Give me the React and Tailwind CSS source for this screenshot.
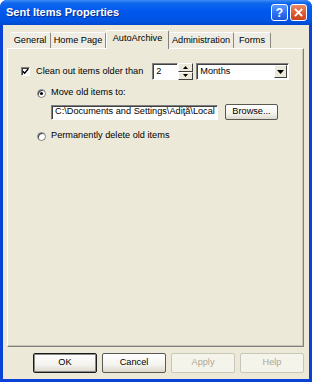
import React from "react";

const tabs = [
  { label: "General", w: "w-[41px]" },
  { label: "Home Page", w: "w-[55px]" },
  { label: "AutoArchive", w: "w-[63px]", active: true },
  { label: "Administration", w: "w-[65px]" },
  { label: "Forms", w: "w-[37px]" },
];

export default function App() {
  return (
    <div className="w-[312px] h-[382px] flex flex-col bg-[#0842d6] rounded-t-[7px] overflow-hidden font-['Liberation_Sans',Arial,sans-serif] text-[9.2px] text-black leading-none">
      {/* TITLE BAR */}
      <div className="h-[25px] shrink-0 flex items-center justify-between pl-[6px] pr-[5px] bg-[linear-gradient(180deg,#3f8ff7_0%,#1068ee_12%,#0058ee_45%,#0054e3_85%,#0048cc_100%)]">
        <span className="text-white font-bold text-[11px] [text-shadow:1px_1px_0_#0b2a8a]">
          Sent Items Properties
        </span>
        <div className="flex gap-[2px]">
          <div className="w-[17px] h-[17px] rounded-[3px] border border-white bg-[linear-gradient(180deg,#5a9bfc_0%,#2a6df1_60%,#1e58d8_100%)] flex items-center justify-center text-white font-bold text-[12px]">
            ?
          </div>
          <div className="w-[17px] h-[17px] rounded-[3px] border border-white bg-[linear-gradient(180deg,#ec8c66_0%,#de5a32_55%,#c8431f_100%)] flex items-center justify-center">
            <svg width="9" height="9" viewBox="0 0 9 9">
              <path d="M1.5 1.5 L7.5 7.5 M7.5 1.5 L1.5 7.5" stroke="#fff" strokeWidth="1.8" strokeLinecap="square" />
            </svg>
          </div>
        </div>
      </div>

      {/* BODY */}
      <div className="flex-1 mx-[3px] mb-[3px] bg-[#ece9d8] flex flex-col pt-[5px] pl-[4px] pr-[5px]">
        {/* TABS */}
        <div className="h-[18px] flex items-end pl-[3px] relative z-10">
          {tabs.map((t) =>
            t.active ? (
              <div
                key={t.label}
                className={`${t.w} h-[19px] -mb-[1px] bg-[#ece9d8] border-t border-l border-white border-r border-r-[#808080] rounded-t-[2px] flex items-center justify-center pb-[2px]`}
              >
                {t.label}
              </div>
            ) : (
              <div
                key={t.label}
                className={`${t.w} h-[16px] bg-[#efede3] border-t border-t-white border-r border-r-[#8c8a80] rounded-t-[2px] flex items-center justify-center`}
              >
                {t.label}
              </div>
            )
          )}
        </div>

        {/* PANEL */}
        <div className="h-[299px] shrink-0 border border-t-white border-l-white border-r-[#808080] border-b-[#808080] shadow-[inset_-1px_-1px_0_#c8c5b6] pt-[14px] pl-[13px]">
          {/* Clean out row */}
          <div className="h-[17px] flex items-center">
            <div className="w-[9px] h-[9px] bg-white border border-t-[#808080] border-l-[#808080] border-r-white border-b-white shadow-[inset_1px_1px_0_#404040] flex items-center justify-center">
              <svg width="7" height="7" viewBox="0 0 7 7">
                <path d="M0.8 3.2 L2.6 5.2 L6.2 1" stroke="#000" strokeWidth="1.4" fill="none" />
              </svg>
            </div>
            <span className="ml-[6px]">Clean out items older than</span>
            <div className="ml-[9px] w-[26px] h-[17px] bg-white border border-t-[#808080] border-l-[#808080] border-r-white border-b-white shadow-[inset_1px_1px_0_#404040] flex items-center pl-[3px]">
              2
            </div>
            <div className="w-[15px] h-[17px] flex flex-col">
              <SpinButton up />
              <SpinButton />
            </div>
            <div className="ml-[3px] w-[93px] h-[17px] bg-white border border-t-[#808080] border-l-[#808080] border-r-white border-b-white shadow-[inset_1px_1px_0_#404040] flex items-center justify-between pl-[3px] pr-[1px]">
              <span>Months</span>
              <div className="w-[13px] h-[13px] bg-[#ece9d8] border border-t-white border-l-white border-r-[#404040] border-b-[#404040] flex items-center justify-center">
                <svg width="7" height="4" viewBox="0 0 7 4">
                  <path d="M0 0 H7 L3.5 4 Z" fill="#000" />
                </svg>
              </div>
            </div>
          </div>

          {/* Move old items */}
          <div className="mt-[7px] ml-[16px] h-[12px] flex items-center">
            <Radio checked />
            <span className="ml-[5px]">Move old items to:</span>
          </div>

          <div className="mt-[5px] ml-[30px] flex items-center gap-[7px]">
            <div className="w-[167px] h-[15px] bg-white border border-t-[#808080] border-l-[#808080] border-r-white border-b-white shadow-[inset_1px_1px_0_#404040] flex items-center pl-[3px] whitespace-nowrap overflow-hidden">
              C:\Documents and Settings\Adiţă\Local
            </div>
            <XpButton className="w-[53px] h-[16px]">Browse...</XpButton>
          </div>

          <div className="mt-[10px] ml-[16px] h-[12px] flex items-center">
            <Radio />
            <span className="ml-[5px]">Permanently delete old items</span>
          </div>
        </div>

        {/* BUTTONS */}
        <div className="mt-[6px] flex justify-end gap-[5px]">
          <XpButton className="w-[64px] h-[20px]" isDefault>OK</XpButton>
          <XpButton className="w-[64px] h-[20px]">Cancel</XpButton>
          <XpButton className="w-[64px] h-[20px]" disabled>Apply</XpButton>
          <XpButton className="w-[64px] h-[20px]" disabled>Help</XpButton>
        </div>
      </div>
    </div>
  );
}

function SpinButton({ up }) {
  return (
    <div className="flex-1 bg-[#ece9d8] border border-t-white border-l-white border-r-[#404040] border-b-[#404040] flex items-center justify-center">
      <svg width="5" height="3" viewBox="0 0 5 3">
        <path d={up ? "M0 3 H5 L2.5 0 Z" : "M0 0 H5 L2.5 3 Z"} fill="#000" />
      </svg>
    </div>
  );
}

function Radio({ checked }) {
  return (
    <div className="w-[9px] h-[9px] rounded-full bg-white border border-[#808080] shadow-[inset_1px_1px_0_#404040] flex items-center justify-center">
      {checked && <div className="w-[3px] h-[3px] rounded-full bg-black" />}
    </div>
  );
}

function XpButton({ children, className = "", disabled, isDefault }) {
  const tone = disabled
    ? "border-[#c9c7ba] bg-[#f5f4ea] text-[#aca899]"
    : isDefault
    ? "border-[#1c1c1c] bg-[linear-gradient(180deg,#ffffff_0%,#f4f3ee_60%,#dcd8cc_100%)] shadow-[inset_0_0_0_1px_#8a8a8a]"
    : "border-[#5a5a52] bg-[linear-gradient(180deg,#ffffff_0%,#f4f3ee_60%,#dcd8cc_100%)]";
  return (
    <div className={`${className} ${tone} border rounded-[2px] flex items-center justify-center`}>
      {children}
    </div>
  );
}
